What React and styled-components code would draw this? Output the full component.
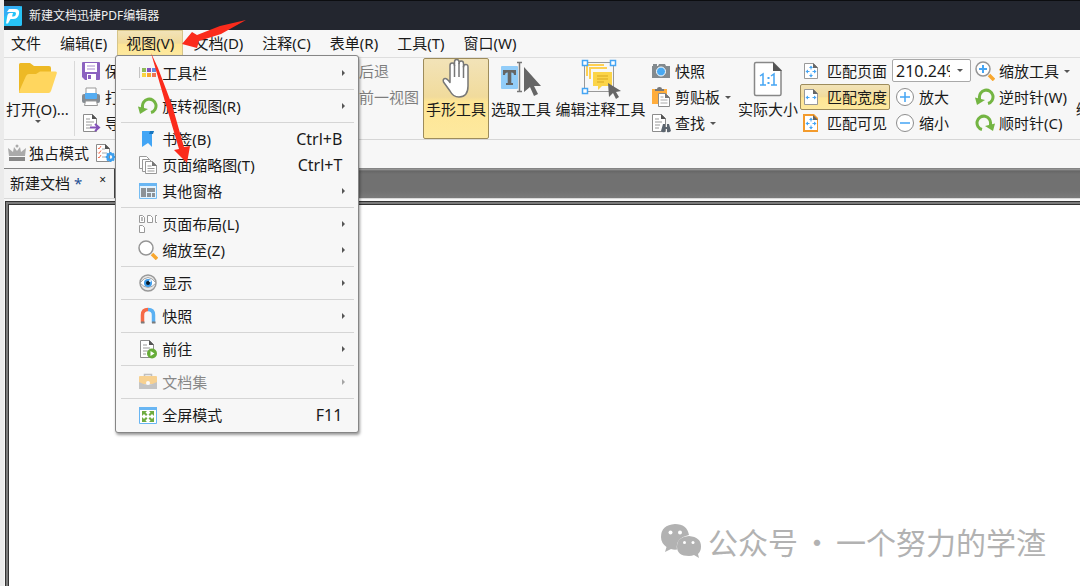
import React from 'react';
import styled, { createGlobalStyle, css } from 'styled-components';

const GlobalStyle = createGlobalStyle`
    * {
        box-sizing: border-box;
    }

    body {
        margin: 0;
        background: #fff;
        color: #1a1a1a;
        font-family: 'Noto Sans', 'Noto Sans CJK SC', sans-serif;
        font-size: 15px;
        line-height: 20px;
    }

    button,
    input {
        margin: 0;
        padding: 0;
        border: 0;
        color: inherit;
        font: inherit;
        background: none;
        white-space: nowrap;
    }

    svg {
        display: block;
        flex: none;
    }
`;

const gold = css`
    border-color: #9d8c5c;
    background: linear-gradient(
        to bottom,
        #f2e3b8 0%,
        #f1db9c 48%,
        #fee595 54%,
        #fde99f 100%
    );
`;

const Window = styled.div`
    display: flex;
    flex-direction: column;
    min-height: 100vh;
    overflow: hidden;
    position: relative;
    background: #f7f7f7;
    border-left: 4px solid #ebebeb;
`;

const TitleBar = styled.header`
    display: flex;
    align-items: center;
    gap: 7px;
    height: 30px;
    margin-left: -4px;
    padding-left: 2px;
    color: #f1f1f1;
    background: #23262f;
    border-top: 1px solid #0c0d10;
`;

const Title = styled.h1`
    margin: 0;
    font-size: 12px;
    font-weight: 400;
`;

const MenuBar = styled.nav`
    display: flex;
    gap: 1px;
    height: 27px;
    margin-left: -2px;
`;

const MenuSlot = styled.div`
    position: relative;
`;

const MenuTitle = styled.button`
    height: 27px;
    padding: 0 8px 2px;
    border: 1px solid transparent;
    ${(p) =>
        p.$open &&
        css`
            ${gold}
            border-color: #d6c58a;
        `}
`;

const Popup = styled.div`
    top: 25px;
    left: -2px;
    z-index: 5;
    width: 244px;
    padding: 4px 0;
    position: absolute;
    background: #f7f7f7;
    border: 1px solid #868686;
    border-radius: 3px;
    box-shadow: 1px 2px 3px rgba(0, 0, 0, 0.4);
`;

const PopupItem = styled.button`
    display: flex;
    align-items: center;
    gap: 4px;
    width: 100%;
    height: 26px;
    padding: 0 12px 1px 22px;
    opacity: ${(p) => (p.disabled ? 0.5 : 1)};
`;

const PopupIcon = styled.span`
    display: flex;
    width: 20px;
    justify-content: center;
`;

const Shortcut = styled.span`
    margin-left: auto;
    padding-right: 4px;
    font-size: 16px;
`;

const More = styled.svg`
    margin-left: auto;
`;

const Divider = styled.hr`
    height: 1px;
    margin: 3px 4px 3px 5px;
    border: 0;
    background: #d5d5d5;
`;

const Ribbon = styled.section`
    display: flex;
    height: 83px;
    border-top: 1px solid #dedede;
    border-bottom: 1px solid #d6d6d6;
`;

const BigTool = styled.button`
    display: flex;
    flex: none;
    flex-direction: column;
    align-items: center;
    width: ${(p) => p.$width}px;
    height: 81px;
    border: 1px solid transparent;
    border-radius: 2px;
    ${(p) => p.$active && gold}
`;

const BigIcon = styled.span`
    display: flex;
    align-items: center;
    height: 40px;
`;

const Column = styled.div`
    display: flex;
    flex: none;
    flex-direction: column;
    width: ${(p) => p.$width}px;
`;

const SmallTool = styled.button`
    display: flex;
    align-items: center;
    align-self: flex-start;
    gap: ${(p) => p.$gap || 4}px;
    height: 26px;
    padding: 0 2px;
    border: 1px solid transparent;
    border-radius: 2px;
    opacity: ${(p) => (p.disabled ? 0.55 : 1)};
    ${(p) => p.$active && gold}
`;

const Rule = styled.span`
    flex: none;
    width: 1px;
    margin: 3px 3px 3px 3px;
    background: #d9d9d9;
`;

const ZoomBox = styled.div`
    display: flex;
    align-items: center;
    width: 79px;
    height: 23px;
    margin: 1px 0 2px;
    background: #fff;
    border: 1px solid #a9a9a9;
    border-radius: 2px;
`;

const ZoomInput = styled.input`
    width: 57px;
    height: 20px;
    padding-left: 3px;
    font-size: 16px;
    outline: none;
`;

const ZoomDrop = styled.button`
    display: flex;
    flex: 1;
    justify-content: center;
`;

const ModeBar = styled.section`
    display: flex;
    align-items: center;
    gap: 1px;
    height: 28px;
`;

const TabStrip = styled.div`
    display: flex;
    height: 31px;
    border-top: 1px solid #858585;
    border-bottom: 1px solid #d8d8d8;
    background: linear-gradient(
        to bottom,
        #a2a2a2 0,
        #666 2px,
        #717171 5px,
        #717171 22px,
        #7a7a7a 100%
    );
`;

const Tab = styled.div`
    display: flex;
    align-items: center;
    justify-content: space-between;
    width: 111px;
    padding: 0 8px 2px 6px;
    background: #f3f3f3;
    border-right: 1px solid #444;
`;

const Dirty = styled.span`
    color: #1d4f94;
`;

const CloseTab = styled.button`
    font-size: 12px;
    line-height: 14px;
    margin-bottom: 5px;
`;

const Page = styled.main`
    display: flex;
    flex: 1;
    align-items: flex-end;
    justify-content: flex-end;
    margin: 2px 0 0 1px;
    padding: 0 34px 23px 0;
    background: #fff;
    border-top: 1px solid #333;
    border-left: 1px solid #333;
    box-shadow: inset 2px 2px 0 #7b7b7b, inset 3px 3px 0 #333;
`;

const Watermark = styled.p`
    display: flex;
    align-items: center;
    gap: 4px;
    margin: 0;
    color: #b2b2b2;
    font-family: 'Noto Sans CJK SC', sans-serif;
    font-size: 30px;
    line-height: 44px;

    svg {
        margin-right: 2px;
    }
`;

const Arrows = styled.svg`
    top: 0;
    left: -4px;
    z-index: 10;
    position: absolute;
    pointer-events: none;
`;

function Svg({ w = 20, h = w, box, children }) {
    return (
        <svg
            width={w}
            height={h}
            viewBox={box || `0 0 ${w} ${h}`}
            fill="none"
            aria-hidden="true"
        >
            {children}
        </svg>
    );
}

const Caret = () => (
    <Svg w={8} h={5}>
        <path d="M1 1h6L4 4z" fill="#555" />
    </Svg>
);

const LogoIcon = () => (
    <Svg w={20}>
        <rect width="20" height="20" rx="2" fill="#35aef4" />
        <path d="M0 20V12L20 0v18q0 2-2 2z" fill="#27c3f7" />
        <path
            d="M7 3h6q5 0 4 5-1 5-6 5H8.500L6 17.500H4L5.500 9q.5-2 2.500-2h3l-1 3.500h1.500q2 0 2.500-2.500.300-2-1.500-2H5z"
            fill="#fff"
        />
    </Svg>
);

const FolderIcon = () => (
    <Svg w={40} h={34}>
        <path
            d="M1 2.500Q1 1 2.500 1H12l4 3h15q2 0 2 2v9L4 31H2q-1 0-1-1.500z"
            fill="#edb925"
        />
        <path
            d="M11 12h7l4-2.500h15.500q1.800 0 1.300 1.800L33 29q-.7 2-2.500 2H3q-2.500 0-1.500-2.500L8 14q1-2 3-2z"
            fill="#ffd65e"
        />
    </Svg>
);

const SaveIcon = () => (
    <Svg w={20}>
        <path d="M1 2q0-1 1-1h16q1 0 1 1v16q0 1-1 1H4l-3-3z" fill="#8b62c0" />
        <path d="M4 2h12v9H4zM6 13h9v6H6z" fill="#fff" />
        <path d="M6 5h8M6 8h8" stroke="#a98fd0" />
        <path d="M7 14h3v4H7z" fill="#8b62c0" />
    </Svg>
);

const PrintIcon = () => (
    <Svg w={20}>
        <path d="M5 7V1h10v6" fill="#fff" stroke="#999" />
        <rect x="1" y="7" width="18" height="9" rx="2" fill="#858c92" />
        <path d="M4 6h12v5q0 1-1 1H5q-1 0-1-1z" fill="#55adf2" />
        <path d="M4.500 14h11l1 4.500h-13z" fill="#fff" stroke="#999" />
    </Svg>
);

const DocBase = () => (
    <>
        <path d="M2.500 1.500h9l4 4v13h-13z" fill="#fff" stroke="#8c8c8c" />
        <path d="M11 1v5h5z" fill="#555" />
    </>
);

const ExportIcon = () => (
    <Svg w={20}>
        <DocBase />
        <path d="M5 6h4M5 9h8M5 12h6M5 15h4" stroke="#999" />
        <path d="M9 14.500h8M14 11l4 3.500-4 3.500" stroke="#8351b8" strokeWidth="2" />
    </Svg>
);

const CrownIcon = () => (
    <Svg w={20}>
        <path
            d="m2 13-1-8 5 4 1-5 3 4 3-4 1 5 5-4-1 8z"
            fill="#aaa"
        />
        <circle cx="10" cy="3" r="1.500" fill="#aaa" />
        <path d="M2 14h16v4H2z" fill="#888" />
    </Svg>
);

const ChecklistIcon = () => (
    <Svg w={21} h={20}>
        <path d="M.5 1.500h9l4 4v13H.5z" fill="#fff" stroke="#8c8c8c" />
        <path d="M9 1v5h5z" fill="#555" />
        <path
            d="m2 5 1 1 2-3M2 9.500l1 1 2-3M2 14l1 1 2-3"
            stroke="#f26f52"
        />
        <path d="M6 6h3M6 10h5M6 14h3" stroke="#aaa" />
        <circle cx="14.500" cy="14" r="3" stroke="#3fa0ee" strokeWidth="2.500" />
        <path
            d="M14.500 9v2M14.500 17v2M9.500 14h2M17.500 14h2M11 10.500l1.500 1.500M16.500 16l1.500 1.500M18 10.500 16.500 12M12.500 16 11 17.500"
            stroke="#3fa0ee"
            strokeWidth="2"
        />
    </Svg>
);

const HandIcon = () => (
    <Svg w={32} h={42}>
        <path
            d="M8 23.500V8.500Q8 6 10.200 6t2.300 2.500V5Q12.500 2.500 14.700 2.500T17 5v1.500Q17 4 19.200 4t2.300 2.500V10q0-2.500 2.300-2.500T26 10v19q0 11-9 11-6 0-9-6L1.500 25Q.5 22 3 21.500q2-.2 5 4z"
            transform="translate(2 -1)"
            fill="#fff"
            stroke="#777"
            strokeWidth="1.500"
            strokeLinejoin="round"
        />
        <path d="M14.500 7v12M19 5v14M23.500 8v12" stroke="#777" strokeWidth="1.500" />
    </Svg>
);

const SelectIcon = () => (
    <Svg w={42} h={36}>
        <rect x="1" y="5" width="17" height="23" rx="1" fill="#92cdf9" />
        <path d="M3 9h13v5h-2q0-2.500-2-2.500h-.7V22H13v2H6v-2h1.700V11.500H7q-2 0-2 2.500H3z" fill="#666" />
        <path d="M17 1.500h5M17 30.500h5M19.500 2v28" stroke="#777" strokeWidth="1.500" />
        <path d="M24 6v25l6-5 4 9 4-2-4-8h7z" fill="#666" />
    </Svg>
);

const EditNoteIcon = () => (
    <Svg w={40} h={40}>
        <path d="M3.500 3.500h29v29h-29z" stroke="#999" />
        <path d="M6 17V6h17M9 20V9h17" stroke="#fed052" strokeWidth="2" />
        <path d="M12 13h19v14H21l-4 4v-4h-5z" fill="#fbd448" />
        <path d="M16 17h11M16 20h11M16 23h7" stroke="#d7a720" />
        <g fill="#fff" stroke="#45a5f4" strokeWidth="1.500">
            <path d="M1.500 1.500h5v5h-5zM29.500 1.500h5v5h-5zM1.500 29.500h5v5h-5z" />
        </g>
        <path d="m27 24 1 14 4-4 3 6 3-2-3-5 5-1z" fill="#666" />
    </Svg>
);

const CameraIcon = () => (
    <Svg w={20}>
        <path d="M2 3h4v2H2zM7 5l1-2h6l1 2h4v12H1V5z" fill="#838a8e" />
        <circle cx="10" cy="10.500" r="4.500" fill="#49a9f2" stroke="#fff" />
    </Svg>
);

const ClipboardIcon = () => (
    <Svg w={20}>
        <path d="M1 2h15v15H1z" fill="#ffad3c" />
        <path d="M4 4V2h2q0-2 2.500-2T11 2h2v2z" fill="#777" />
        <path d="M7.500 6.500h7l4 4v9h-11z" fill="#fff" stroke="#8c8c8c" />
        <path d="M14 6v5h5z" fill="#777" />
        <path d="M9.500 10h3M9.500 13h7M9.500 16h7" stroke="#aaa" />
    </Svg>
);

const FindIcon = () => (
    <Svg w={20}>
        <path d="M1.500 1.500h9l4 4v13h-13z" fill="#fff" stroke="#8c8c8c" />
        <path d="M10 1v5h5z" fill="#555" />
        <path d="M4 6h4M4 9h7M4 12h5M4 15h4" stroke="#999" />
        <path d="m12 11-2 7q1 2 4 1v-3h2v3q2 1 4-1l-2-7h-2v3h-2v-3z" fill="#5d6670" />
    </Svg>
);

const ActualIcon = () => (
    <Svg w={30} h={36}>
        <path
            d="M3 1.500h17l8 8V33q0 1.500-1.500 1.500H3Q1.500 34.500 1.500 33V3Q1.500 1.500 3 1.500z"
            fill="#fff"
            stroke="#888"
            strokeWidth="1.500"
        />
        <path d="M20 1v9h9z" fill="#555" />
        <path
            d="m7 15 3-2v11m-3 0h6M18 15l3-2v11m-3 0h6"
            stroke="#45a5f4"
            strokeWidth="1.500"
        />
        <path d="M14.500 16h2v2h-2zM14.500 21h2v2h-2z" fill="#45a5f4" />
    </Svg>
);

function FitIcon({ frame, vertical }) {
    return (
        <Svg w={16} h={18}>
            {frame && <path d="M0 0h11l4 4v14H0z" fill="#f39b2d" />}
            <path
                d={frame ? 'M2 2h8l4 4v10H2z' : 'M1.500 1.500h9l4 4v11h-13z'}
                fill="#fff"
                stroke={frame ? 'none' : '#999'}
            />
            <path d="M10 1v5h5z" fill="#666" />
            <path
                d="M2.500 9.500 5 7.500v4zM13.500 9.500 11 7.500v4z"
                fill="#45a5f4"
            />
            <path d="M4 9.500h2.500M9.500 9.500H12" stroke="#45a5f4" />
            {vertical && (
                <>
                    <path d="M8 3.500 6 6h4zM8 15.500 6 13h4z" fill="#45a5f4" />
                    <path d="M8 5v2.500M8 11.500V14" stroke="#45a5f4" />
                </>
            )}
        </Svg>
    );
}

function RoundIcon({ minus }) {
    return (
        <Svg w={20}>
            <circle cx="10" cy="10" r="8.500" fill="#fff" stroke="#8d8d8d" />
            <path
                d={minus ? 'M5 10h10' : 'M5 10h10M10 5v10'}
                stroke="#45a5f4"
                strokeWidth="1.500"
            />
        </Svg>
    );
}

function LensIcon({ plus }) {
    return (
        <Svg w={20}>
            <path d="m14 14 5 5" stroke="#f8a72e" strokeWidth="3.500" />
            <circle cx="8" cy="8" r="7" fill="#fff" stroke="#959595" strokeWidth="1.500" />
            {plus && <path d="M4 8h8M8 4v8" stroke="#45a5f4" strokeWidth="2" />}
        </Svg>
    );
}

function RotateIcon({ cw }) {
    return (
        <Svg w={20}>
            <g transform={cw ? 'matrix(-1 0 0 1 20 0)' : undefined}>
                <path
                    d="M13 16.500A6.800 6.800 0 1 0 4.500 11v2"
                    stroke="#74b543"
                    strokeWidth="3"
                />
                <path d="M0 10.500 10 13l-8 5z" fill="#74b543" />
            </g>
        </Svg>
    );
}

const ToolbarsIcon = () => (
    <Svg w={20}>
        <path d="M1.500 4v11" stroke="#c4c4c4" />
        <path d="M4 5h4v4H4z" fill="#8dbb58" />
        <path d="M9 5h4v4H9z" fill="#8452bd" />
        <path d="M14 5h4v4h-4z" fill="#6689df" />
        <path d="M4 10h4v4H4z" fill="#f9d440" />
        <path d="M9 10h4v4H9z" fill="#f9a82f" />
        <path d="M14 10h4v4h-4z" fill="#ef7656" />
    </Svg>
);

const BookmarkIcon = () => (
    <Svg w={20}>
        <path d="M4 2h12l-2 2v14l-4-4-6 4z" fill="#42a5f5" />
        <path d="m12 2-1 3h4l1-3z" fill="#1876bf" />
    </Svg>
);

const PagesIcon = () => (
    <Svg w={20}>
        <g fill="#fff" stroke="#999">
            <path d="M1.500 1.500h7l3 3v9h-10z" />
            <path d="M4.500 4.500h7l3 3v9h-10z" />
            <path d="M7.500 6.500h7l4 4v8h-11z" />
        </g>
        <path d="M14 6v5h5z" fill="#777" />
        <path d="M9.500 11h4M9.500 13.500h7M9.500 16h7" stroke="#999" />
    </Svg>
);

const PanesIcon = () => (
    <Svg w={20}>
        <path d="M1.500 2.500h17v15h-17z" fill="#e4f3fe" stroke="#76bdf3" />
        <path d="M1 2h18v3H1z" fill="#69b6f3" />
        <path d="M3 7h5v9H3zM9 7h8v4H9zM9 12h4v4H9zM14 12h3v4h-3z" fill="#8c9297" />
    </Svg>
);

const LayoutIcon = () => (
    <Svg w={20}>
        <path
            d="M1.500 1.500h3l2 2v5h-5zM9.500 1.500h3l2 2v5h-5zM1.500 11.500h3l2 2v5h-5zM19 1.500h-1.500v7H19"
            fill="#fff"
            stroke="#999"
        />
        <path d="M3 4h2M3 6h2" stroke="#777" />
    </Svg>
);

const EyeIcon = () => (
    <Svg w={20}>
        <circle cx="10" cy="10" r="8" fill="#e8e8e8" stroke="#999" strokeWidth="1.500" />
        <path d="M2 10q8-11 16 0-8 9-16 0z" fill="#fff" stroke="#a5a5a5" />
        <circle cx="10" cy="10" r="4" fill="#3f9ce9" />
        <circle cx="10" cy="10" r="2" fill="#0a1925" />
        <circle cx="12" cy="8" r="1" fill="#fff" />
    </Svg>
);

const MagnetIcon = () => (
    <Svg w={20}>
        <path d="M4.500 17V9Q4.500 3.500 10 3.500" stroke="#f56a47" strokeWidth="3.500" />
        <path d="M10 3.500q5.500 0 5.500 5.500v8" stroke="#5ab0f2" strokeWidth="3.500" />
        <path d="M3 16.500h3.500M14 16.500h3.500" stroke="#7b7b7b" strokeWidth="2" />
    </Svg>
);

const GotoIcon = () => (
    <Svg w={20}>
        <DocBase />
        <path d="M5 6h4M5 9h7M5 12h5M5 15h3" stroke="#999" />
        <circle cx="14" cy="14.500" r="5" fill="#66ac38" />
        <path d="m12.500 12 4 2.500-4 2.500z" fill="#fff" />
    </Svg>
);

const CaseIcon = () => (
    <Svg w={20}>
        <path d="M6.500 5V2.500h7V5" stroke="#888" strokeWidth="1.500" />
        <rect x="1" y="4" width="18" height="8" rx="1" fill="#f8ac2d" />
        <path d="M1 10q9 5 18 0v7H1z" fill="#939393" />
        <circle cx="10" cy="11" r="2" fill="#fff" />
    </Svg>
);

const FullscreenIcon = () => (
    <Svg w={20}>
        <path d="M1.500 2.500h17v16h-17z" fill="#fff" stroke="#69b6f3" />
        <path d="M1 2h18v3H1z" fill="#69b6f3" />
        <path
            d="M4 6h5L7.500 7.500 9.500 9.500 8 11 6 9l-2 2zM16 6h-5l1.500 1.500-2 2L12 11l2-2 2 2zM4 17h5l-1.500-1.500 2-2L8 12l-2 2-2-2zM16 17h-5l1.500-1.500-2-2L12 12l2 2 2-2z"
            fill="#6fac40"
        />
    </Svg>
);

const WechatIcon = () => (
    <Svg w={42} h={36}>
        <path
            d="M15 1Q1 2 1 14q0 6 5.500 10L5 29l6-3q3 1 6 .5Q15 15 29 12 27 1 15 1z"
            fill="#b2b2b2"
        />
        <path
            d="M29 13q-12 1-12 10.500T29 33q3 0 5-1l5 3-1-4q3-3 3-7.500Q41 14 29 13z"
            fill="#b2b2b2"
        />
        <g fill="#fff">
            <circle cx="10.500" cy="9.500" r="2" />
            <circle cx="20" cy="9.500" r="2" />
            <circle cx="24.500" cy="19.500" r="1.500" />
            <circle cx="33" cy="19.500" r="1.500" />
        </g>
    </Svg>
);

const menus = [
    '文件',
    '编辑(E)',
    '视图(V)',
    '文档(D)',
    '注释(C)',
    '表单(R)',
    '工具(T)',
    '窗口(W)',
];

const viewMenu = [
    [{ icon: <ToolbarsIcon />, label: '工具栏' }],
    [{ icon: <RotateIcon />, label: '旋转视图(R)' }],
    [
        { icon: <BookmarkIcon />, label: '书签(B)', keys: 'Ctrl+B' },
        { icon: <PagesIcon />, label: '页面缩略图(T)', keys: 'Ctrl+T' },
        { icon: <PanesIcon />, label: '其他窗格' },
    ],
    [
        { icon: <LayoutIcon />, label: '页面布局(L)' },
        { icon: <LensIcon />, label: '缩放至(Z)' },
    ],
    [{ icon: <EyeIcon />, label: '显示' }],
    [{ icon: <MagnetIcon />, label: '快照' }],
    [{ icon: <GotoIcon />, label: '前往' }],
    [{ icon: <CaseIcon />, label: '文档集', disabled: true }],
    [{ icon: <FullscreenIcon />, label: '全屏模式', keys: 'F11' }],
];

function ViewMenu() {
    return (
        <Popup role="menu">
            {viewMenu.map((group, idx) => (
                <React.Fragment key={idx}>
                    {idx > 0 && <Divider />}
                    {group.map(({ icon, label, keys, disabled }) => (
                        <PopupItem key={label} role="menuitem" disabled={disabled}>
                            <PopupIcon>{icon}</PopupIcon>
                            {label}
                            {keys ? (
                                <Shortcut>{keys}</Shortcut>
                            ) : (
                                <More width="5" height="8" viewBox="0 0 5 8">
                                    <path d="M1 1v6l3-3z" fill="#555" />
                                </More>
                            )}
                        </PopupItem>
                    ))}
                </React.Fragment>
            ))}
        </Popup>
    );
}

function Tool({ icon, label, caret, ...rest }) {
    return (
        <SmallTool {...rest}>
            {icon}
            {label}
            {caret && <Caret />}
        </SmallTool>
    );
}

function LargeTool({ icon, label, caret, width, active }) {
    return (
        <BigTool $width={width} $active={active}>
            <BigIcon>{icon}</BigIcon>
            {label}
            {caret && <Caret />}
        </BigTool>
    );
}

function MainRibbon() {
    return (
        <Ribbon>
            <LargeTool width={67} icon={<FolderIcon />} label="打开(O)..." caret />
            <Rule />
            <Column $width={254}>
                <Tool icon={<SaveIcon />} label="保存" />
                <Tool icon={<PrintIcon />} label="打印" />
                <Tool icon={<ExportIcon />} label="导出" />
            </Column>
            <Column $width={91}>
                <Tool icon={<RotateIcon />} label="后退" disabled />
                <Tool icon={<RotateIcon />} label="前一视图" disabled />
            </Column>
            <LargeTool width={66} icon={<HandIcon />} label="手形工具" active />
            <LargeTool width={64} icon={<SelectIcon />} label="选取工具" />
            <LargeTool width={95} icon={<EditNoteIcon />} label="编辑注释工具" />
            <Column $width={88}>
                <Tool icon={<CameraIcon />} label="快照" />
                <Tool icon={<ClipboardIcon />} label="剪贴板" caret />
                <Tool icon={<FindIcon />} label="查找" caret />
            </Column>
            <LargeTool width={64} icon={<ActualIcon />} label="实际大小" />
            <Column $width={92}>
                <Tool $gap={8} icon={<FitIcon vertical />} label="匹配页面" />
                <Tool $gap={8} icon={<FitIcon />} label="匹配宽度" $active />
                <Tool $gap={8} icon={<FitIcon vertical frame />} label="匹配可见" />
            </Column>
            <Column $width={80}>
                <ZoomBox>
                    <ZoomInput aria-label="缩放比例" defaultValue="210.24%" />
                    <ZoomDrop aria-label="选择缩放比例">
                        <Caret />
                    </ZoomDrop>
                </ZoomBox>
                <Tool icon={<RoundIcon />} label="放大" />
                <Tool icon={<RoundIcon minus />} label="缩小" />
            </Column>
            <Column $width={102}>
                <Tool icon={<LensIcon plus />} label="缩放工具" caret />
                <Tool icon={<RotateIcon />} label="逆时针(W)" />
                <Tool icon={<RotateIcon cw />} label="顺时针(C)" />
            </Column>
            <LargeTool width={64} label="绘制工具" />
        </Ribbon>
    );
}

function App() {
    return (
        <>
            <GlobalStyle />
            <Window>
                <TitleBar>
                    <LogoIcon />
                    <Title>新建文档迅捷PDF编辑器</Title>
                </TitleBar>
                <MenuBar>
                    {menus.map((name, idx) => (
                        <MenuSlot key={name}>
                            <MenuTitle $open={idx === 2}>{name}</MenuTitle>
                            {idx === 2 && <ViewMenu />}
                        </MenuSlot>
                    ))}
                </MenuBar>
                <MainRibbon />
                <ModeBar>
                    <Tool $gap={2} icon={<CrownIcon />} label="独占模式" />
                    <Tool icon={<ChecklistIcon />} label="表单选项" />
                </ModeBar>
                <TabStrip>
                    <Tab>
                        <span>
                            新建文档 <Dirty>*</Dirty>
                        </span>
                        <CloseTab aria-label="关闭">×</CloseTab>
                    </Tab>
                </TabStrip>
                <Page>
                    <Watermark>
                        <WechatIcon />
                        <span>公众号</span>
                        <span>·</span>
                        <span>一个努力的学渣</span>
                    </Watermark>
                </Page>
                <Arrows width="260" height="180" viewBox="0 0 260 180">
                    <path
                        d="M246 20 221 34 199 41 197 48 182 44 192 32 197 35 220 26z"
                        fill="#fb2b1c"
                    />
                    <path
                        d="M151 53 158 68 172 105 184 147 190 146 187 163 174 150 179 149 166 105z"
                        fill="#fb2b1c"
                    />
                </Arrows>
            </Window>
        </>
    );
}

export default App;
